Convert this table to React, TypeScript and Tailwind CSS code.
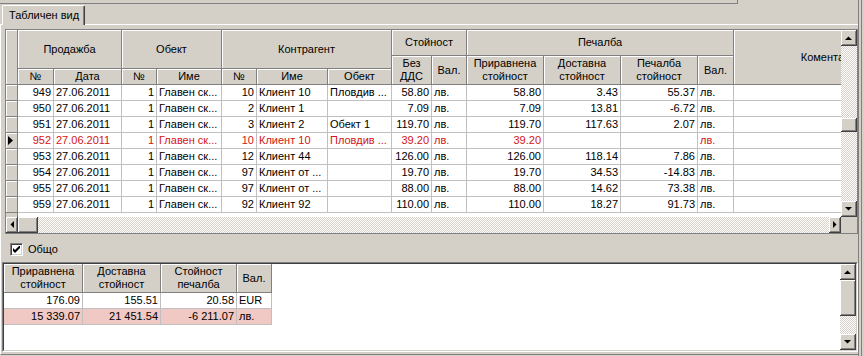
import React from 'react';

type Col = { w: string; r?: boolean };

// column widths include the 1px right grid line
const cols: Col[] = [
  { w: 'w-[36px]', r: true },
  { w: 'w-[68px]' },
  { w: 'w-[35px]', r: true },
  { w: 'w-[65px]' },
  { w: 'w-[35px]', r: true },
  { w: 'w-[71px]' },
  { w: 'w-[64px]' },
  { w: 'w-[40px]', r: true },
  { w: 'w-[35px]' },
  { w: 'w-[77px]', r: true },
  { w: 'w-[77px]', r: true },
  { w: 'w-[77px]', r: true },
  { w: 'w-[36px]' },
  { w: 'w-[184px]' },
];

const rows: string[][] = [
  ['949', '27.06.2011', '1', 'Главен ск...', '10', 'Клиент 10', 'Пловдив ...', '58.80', 'лв.', '58.80', '3.43', '55.37', 'лв.', ''],
  ['950', '27.06.2011', '1', 'Главен ск...', '2', 'Клиент 1', '', '7.09', 'лв.', '7.09', '13.81', '-6.72', 'лв.', ''],
  ['951', '27.06.2011', '1', 'Главен ск...', '3', 'Клиент 2', 'Обект 1', '119.70', 'лв.', '119.70', '117.63', '2.07', 'лв.', ''],
  ['952', '27.06.2011', '1', 'Главен ск...', '10', 'Клиент 10', 'Пловдив ...', '39.20', 'лв.', '39.20', '', '', 'лв.', ''],
  ['953', '27.06.2011', '1', 'Главен ск...', '12', 'Клиент 44', '', '126.00', 'лв.', '126.00', '118.14', '7.86', 'лв.', ''],
  ['954', '27.06.2011', '1', 'Главен ск...', '97', 'Клиент от ...', '', '19.70', 'лв.', '19.70', '34.53', '-14.83', 'лв.', ''],
  ['955', '27.06.2011', '1', 'Главен ск...', '97', 'Клиент от ...', '', '88.00', 'лв.', '88.00', '14.62', '73.38', 'лв.', ''],
  ['959', '27.06.2011', '1', 'Главен ск...', '92', 'Клиент 92', '', '110.00', 'лв.', '110.00', '18.27', '91.73', 'лв.', ''],
];

const totals = [
  { vals: ['176.09', '155.51', '20.58', 'EUR'], pink: false },
  { vals: ['15 339.07', '21 451.54', '-6 211.07', 'лв.'], pink: true },
];
const totalCols: Col[] = [
  { w: 'w-[79px]', r: true },
  { w: 'w-[78px]', r: true },
  { w: 'w-[76px]', r: true },
  { w: 'w-[35px]' },
];

const hdr =
  'shrink-0 bg-[#d4d0c8] border-r border-b border-[#808080] shadow-[inset_1px_1px_0_#ffffff] flex items-center justify-center text-center leading-[13px]';
const btn =
  'shrink-0 bg-[#d4d0c8] border-r border-b border-[#404040] shadow-[inset_1px_1px_0_#ffffff,inset_-1px_-1px_0_#808080] flex items-center justify-center';
const track =
  'bg-[repeating-conic-gradient(#ffffff_0%_25%,#d4d0c8_0%_50%)] bg-[length:2px_2px]';

const Arrow: React.FC<{ dir: 'up' | 'down' | 'left' | 'right' }> = ({ dir }) => {
  const vert = dir === 'up' || dir === 'down';
  const pts = {
    up: '0,4 7,4 3.5,0.5',
    down: '0,0 7,0 3.5,3.5',
    left: '4,0 4,7 0.5,3.5',
    right: '0,0 0,7 3.5,3.5',
  }[dir];
  return (
    <svg width={vert ? 7 : 4} height={vert ? 4 : 7} viewBox={vert ? '0 0 7 4' : '0 0 4 7'}>
      <polygon points={pts} fill="#000000" />
    </svg>
  );
};

const Group: React.FC<{ title: string; topH: string; subH: string; subs: [React.ReactNode, string][] }> = ({
  title,
  topH,
  subH,
  subs,
}) => (
  <div className="flex flex-col shrink-0">
    <div className={`${hdr} ${topH} w-full`}>{title}</div>
    <div className="flex">
      {subs.map(([label, w], i) => (
        <div key={i} className={`${hdr} ${subH} ${w}`}>
          {label}
        </div>
      ))}
    </div>
  </div>
);

const App: React.FC = () => {
  return (
    <div className="w-[864px] h-[356px] bg-[#d4d0c8] flex overflow-hidden text-[11px] text-black font-['Liberation_Sans',Arial,sans-serif]">
      <div className="w-[858px] h-full flex flex-col">
        {/* edge of the panel above */}
        <div className="h-[4px] w-[738px] shrink-0 border-b border-r border-[#808080]" />

        {/* tabs */}
        <div className="h-[20px] shrink-0 flex">
          <div className="relative z-10 ml-[2px] mt-[1px] w-[83px] h-[20px] bg-[#d4d0c8] border-t border-l border-r border-t-white border-l-white border-r-[#404040] shadow-[inset_-1px_0_0_#808080] rounded-t-[2px] flex items-center pl-[6px] pb-[1px]">
            Табличен вид
          </div>
        </div>

        {/* tab sheet */}
        <div className="flex-1 border-t border-l border-b border-t-white border-l-white border-b-[#808080] flex flex-col">
          {/* main grid */}
          <div className="ml-[4px] mt-[4px] w-[853px] h-[205px] shrink-0 border border-[#808080] bg-white flex flex-col">
            <div className="flex h-[187px]">
              <div className="w-[835px] h-full overflow-hidden flex flex-col">
                <div className="flex h-[55px] w-max shrink-0">
                  <div className={`${hdr} w-[12px] h-[55px]`} />
                  <Group title="Продажба" topH="h-[39px]" subH="h-[16px]" subs={[['№', 'w-[36px]'], ['Дата', 'w-[68px]']]} />
                  <Group title="Обект" topH="h-[39px]" subH="h-[16px]" subs={[['№', 'w-[35px]'], ['Име', 'w-[65px]']]} />
                  <Group
                    title="Контрагент"
                    topH="h-[39px]"
                    subH="h-[16px]"
                    subs={[['№', 'w-[35px]'], ['Име', 'w-[71px]'], ['Обект', 'w-[64px]']]}
                  />
                  <Group
                    title="Стойност"
                    topH="h-[26px]"
                    subH="h-[29px]"
                    subs={[[<>Без<br />ДДС</>, 'w-[40px]'], ['Вал.', 'w-[35px]']]}
                  />
                  <Group
                    title="Печалба"
                    topH="h-[26px]"
                    subH="h-[29px]"
                    subs={[
                      [<>Приравнена<br />стойност</>, 'w-[77px]'],
                      [<>Доставна<br />стойност</>, 'w-[77px]'],
                      [<>Печалба<br />стойност</>, 'w-[77px]'],
                      ['Вал.', 'w-[36px]'],
                    ]}
                  />
                  <div className={`${hdr} w-[184px] h-[55px]`}>Коментар</div>
                </div>

                {rows.map((r, ri) => {
                  const sel = ri === 3;
                  return (
                    <div key={ri} className={`flex h-[16px] w-max shrink-0 ${sel ? 'text-[#d41414]' : 'text-black'}`}>
                      <div className="shrink-0 w-[12px] h-[16px] bg-[#d4d0c8] border-r border-b border-[#808080] shadow-[inset_1px_1px_0_#ffffff] flex items-center pl-[2px]">
                        {sel && (
                          <svg width="5" height="9" viewBox="0 0 5 9">
                            <polygon points="0,0 5,4.5 0,9" fill="#000000" />
                          </svg>
                        )}
                      </div>
                      {cols.map((c, ci) => (
                        <div
                          key={ci}
                          className={`shrink-0 ${c.w} h-[16px] border-r border-b border-[#c0c0c0] px-[2px] leading-[15px] whitespace-nowrap overflow-hidden ${
                            c.r ? 'text-right' : 'text-left'
                          }`}
                        >
                          {r[ci]}
                        </div>
                      ))}
                    </div>
                  );
                })}
                <div className="flex-1 flex">
                  <div className="w-[12px] bg-[#d4d0c8] border-r border-[#808080]" />
                </div>
              </div>

              {/* vertical scrollbar */}
              <div className="w-[16px] h-full flex flex-col">
                <div className={`${btn} h-[16px]`}>
                  <Arrow dir="up" />
                </div>
                <div className={`h-[72px] ${track}`} />
                <div className={`${btn} h-[14px]`} />
                <div className={`flex-1 ${track}`} />
                <div className={`${btn} h-[16px]`}>
                  <Arrow dir="down" />
                </div>
              </div>
            </div>

            {/* horizontal scrollbar */}
            <div className="flex h-[16px]">
              <div className="w-[835px] flex">
                <div className={`${btn} w-[12px]`}>
                  <Arrow dir="left" />
                </div>
                <div className={`${btn} w-[20px]`} />
                <div className={`flex-1 ${track}`} />
                <div className={`${btn} w-[12px]`}>
                  <Arrow dir="right" />
                </div>
              </div>
              <div className="w-[16px] bg-[#d4d0c8]" />
            </div>
          </div>

          {/* totals checkbox */}
          <div className="h-[28px] shrink-0 flex items-center pl-[9px] pt-[2px] gap-[5px]">
            <div className="w-[13px] h-[13px] bg-white border border-t-[#808080] border-l-[#808080] border-b-white border-r-white shadow-[inset_1px_1px_0_#404040,inset_-1px_-1px_0_#d4d0c8] flex items-center justify-center">
              <svg width="7" height="7" viewBox="0 0 7 7">
                <polygon points="0,2 2,4 6,0 7,0 7,2 2,7 0,5" fill="#000000" />
              </svg>
            </div>
            <span>Общо</span>
          </div>

          {/* totals panel */}
          <div className="ml-[1px] w-[856px] h-[90px] shrink-0 border border-t-[#808080] border-l-[#808080] border-b-white border-r-white">
            <div className="h-full border border-t-[#404040] border-l-[#404040] border-b-[#d4d0c8] border-r-[#d4d0c8] bg-white flex">
              <div className="flex-1 flex flex-col">
                <div className="flex h-[29px]">
                  <div className={`${hdr} w-[79px] h-[29px]`}>
                    Приравнена
                    <br />
                    стойност
                  </div>
                  <div className={`${hdr} w-[78px] h-[29px]`}>
                    Доставна
                    <br />
                    стойност
                  </div>
                  <div className={`${hdr} w-[76px] h-[29px]`}>
                    Стойност
                    <br />
                    печалба
                  </div>
                  <div className={`${hdr} w-[35px] h-[29px]`}>Вал.</div>
                </div>
                {totals.map((t, ti) => (
                  <div key={ti} className={`flex h-[16px] w-max ${t.pink ? 'bg-[#f0c8c4]' : 'bg-white'}`}>
                    {totalCols.map((c, ci) => (
                      <div
                        key={ci}
                        className={`shrink-0 ${c.w} h-[16px] border-r border-b border-[#c0c0c0] px-[2px] leading-[15px] whitespace-nowrap ${
                          c.r ? 'text-right' : 'text-left'
                        }`}
                      >
                        {t.vals[ci]}
                      </div>
                    ))}
                  </div>
                ))}
              </div>
              <div className="w-[16px] h-full flex flex-col">
                <div className={`${btn} h-[16px]`}>
                  <Arrow dir="up" />
                </div>
                <div className={`${btn} h-[36px]`} />
                <div className={`flex-1 ${track}`} />
                <div className={`${btn} h-[16px]`}>
                  <Arrow dir="down" />
                </div>
              </div>
            </div>
          </div>
        </div>
        <div className="h-[1px] shrink-0" />
      </div>

      {/* outer frame at the right */}
      <div className="w-[6px] h-full border-l border-[#808080] flex">
        <div className="ml-[2px] w-[1px] h-full bg-[#808080]" />
      </div>
    </div>
  );
};

export default App;
